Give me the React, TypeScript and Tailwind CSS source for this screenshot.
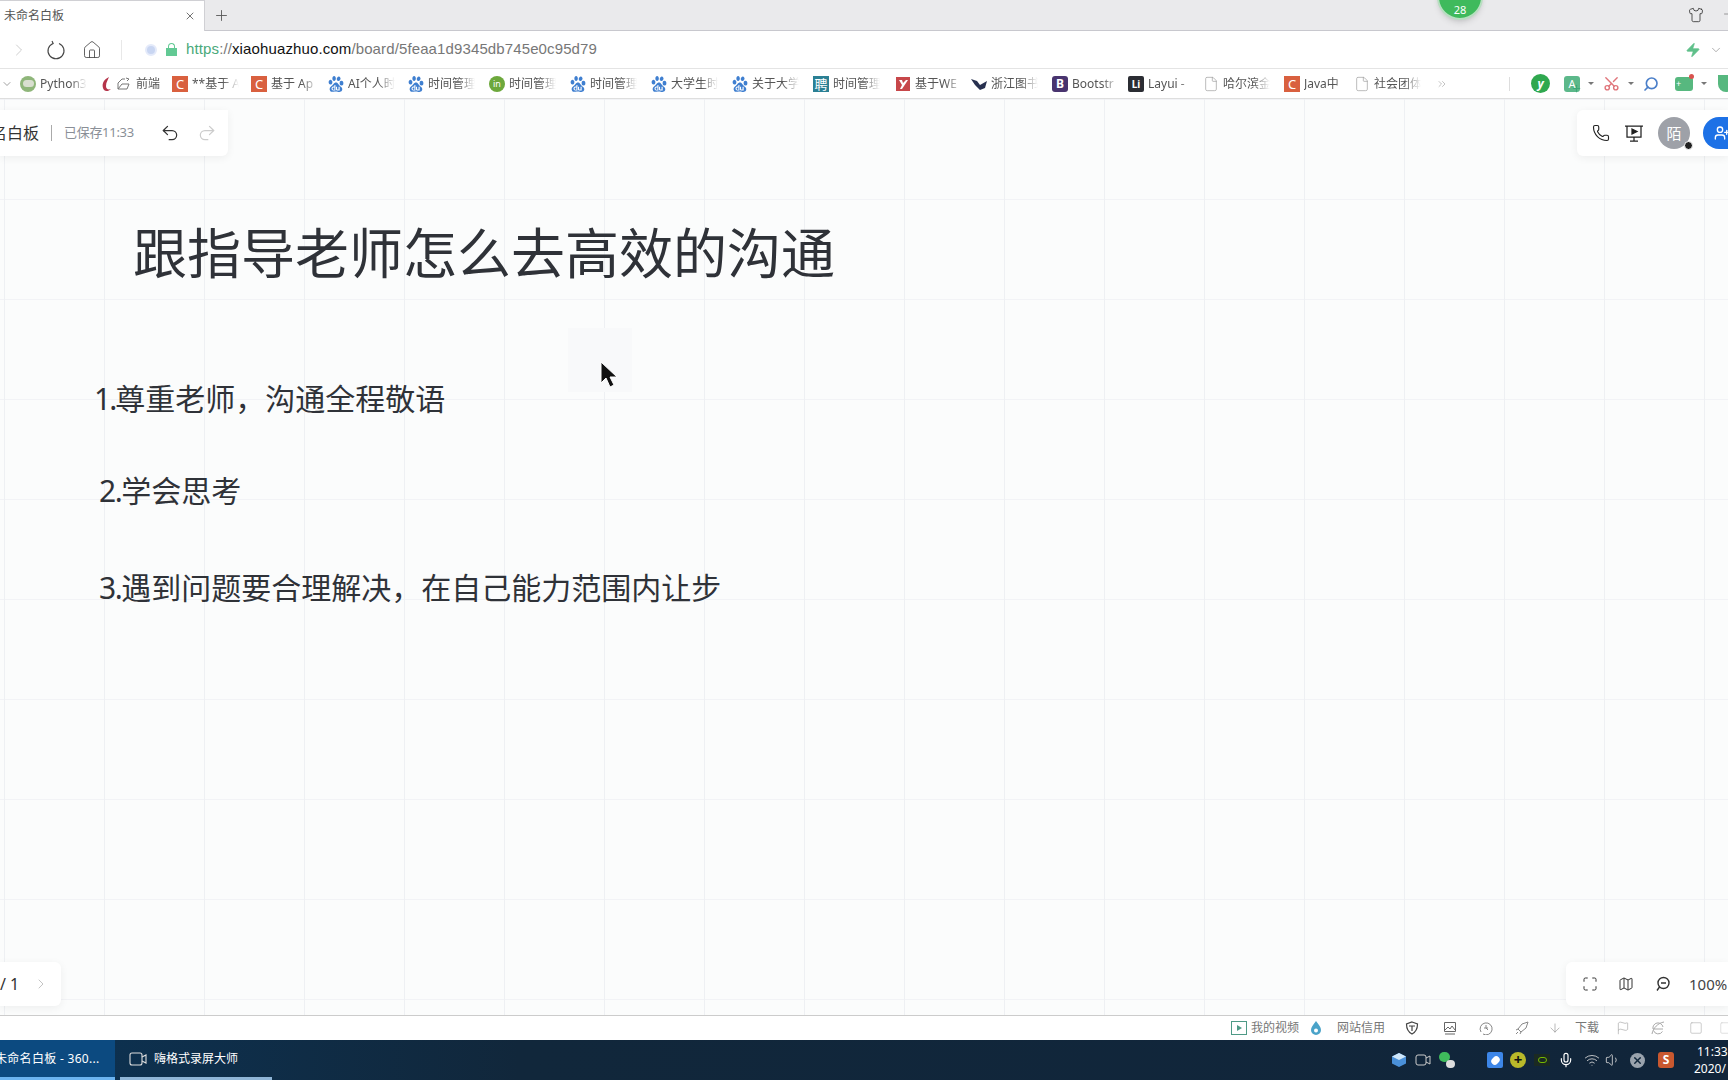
import { ChevronDown, ChevronRight, ChevronsRight, File, Flag, Home, Map, Maximize, Minus, Phone, Plus, Redo2, Scissors, Search, Shirt, Undo2, UserPlus, X, Zap, ArrowDown, Square, Volume1, Wifi, Mic } from 'lucide-react';
import { SiBaidu } from 'react-icons/si';

const bookmarks = [
  { kind: 'python', label: 'Python3', width: 'w-[78px]' },
  { kind: 'front', label: '前端', width: 'w-[74px]' },
  { kind: 'c', label: '**基于 A', width: 'w-[79px]' },
  { kind: 'c', label: '基于 Ap', width: 'w-[77px]' },
  { kind: 'paw', label: 'AI个人时', width: 'w-[80px]' },
  { kind: 'paw', label: '时间管理', width: 'w-[81px]' },
  { kind: 'in', label: '时间管理', width: 'w-[81px]' },
  { kind: 'paw', label: '时间管理', width: 'w-[81px]' },
  { kind: 'paw', label: '大学生时', width: 'w-[81px]' },
  { kind: 'paw', label: '关于大学', width: 'w-[81px]' },
  { kind: 'pin', label: '时间管理', width: 'w-[82px]' },
  { kind: 'red', label: '基于WE', width: 'w-[76px]' },
  { kind: 'bird', label: '浙江图书', width: 'w-[81px]' },
  { kind: 'bootstrap', label: 'Bootstr', width: 'w-[76px]' },
  { kind: 'layui', label: 'Layui -', width: 'w-[75px]' },
  { kind: 'doc', label: '哈尔滨金', width: 'w-[81px]' },
  { kind: 'c', label: 'Java中', width: 'w-[70px]' },
  { kind: 'doc', label: '社会团体', width: 'w-[69px]' },
];

function Favicon({ kind }: { kind: string }) {
  if (kind === 'paw') return <SiBaidu className="w-4 h-4 shrink-0 text-[#3f7fd0]" />;
  if (kind === 'doc') return <File className="w-4 h-4 shrink-0 text-[#9a9a9a]" strokeWidth={1} />;
  if (kind === 'c') {
    return <div className="w-4 h-4 shrink-0 bg-[#d9603f] text-white text-[13px] leading-4 text-center">C</div>;
  }
  if (kind === 'python') {
    return (
      <div className="w-4 h-4 shrink-0 rounded-full bg-[#8fb67a] flex items-center justify-center">
        <div className="w-[11px] h-[7px] rounded-sm bg-[#d9dfd0]" />
      </div>
    );
  }
  if (kind === 'in') {
    return <div className="w-4 h-4 shrink-0 rounded-full bg-[#6da83c] text-white text-[9px] leading-4 text-center">in</div>;
  }
  if (kind === 'pin') {
    return <div className="w-4 h-4 shrink-0 bg-[#2b8094] text-white text-[13px] leading-4 text-center">聘</div>;
  }
  if (kind === 'bootstrap') {
    return <div className="w-4 h-4 shrink-0 rounded-[3px] bg-[#49346f] text-white text-[12px] font-bold leading-4 text-center">B</div>;
  }
  if (kind === 'layui') {
    return <div className="w-4 h-4 shrink-0 rounded-[2px] bg-[#2b2d33] text-white text-[10px] font-bold leading-4 text-center">Li</div>;
  }
  if (kind === 'red') {
    return (
      <svg viewBox="0 0 16 16" className="w-4 h-4 shrink-0">
        <rect x="1" y="1" width="14" height="14" fill="#c7474a" />
        <path d="M4 4h3l1 3 3-3h2l-6 9H5l2-4z" fill="#fff" />
      </svg>
    );
  }
  if (kind === 'bird') {
    return (
      <svg viewBox="0 0 16 16" className="w-4 h-4 shrink-0">
        <path d="M0 3l6 2 3 4v5L4 9zM9 9l7-4-2 7-5 2z" fill="#27304f" />
      </svg>
    );
  }
  return (
    <div className="flex items-center gap-[2px] shrink-0">
      <svg viewBox="0 0 16 16" className="w-4 h-4">
        <path d="M11 1C5 4 3 9 6 14c2 2 5 1 7-1-3 1-5 0-5-3 0-4 2-6 3-9z" fill="#b5344a" />
      </svg>
      <svg viewBox="0 0 16 16" className="w-4 h-4" fill="none" stroke="#777" strokeWidth="1">
        <path d="M2 13V7l4-4h3M2 13h9l2-5H6zM10 2l3 1-2 2" />
      </svg>
    </div>
  );
}

export default function App() {
  return (
    <div className="w-[1728px] h-[1080px] overflow-hidden flex flex-col bg-white text-[#444] font-['Noto_Sans','Noto_Sans_CJK_SC',sans-serif]">
      {/* tab strip */}
      <div className="relative h-[31px] shrink-0 flex items-stretch bg-[#eaeaec] border-b border-[#c8c8ce]">
        <div className="w-[205px] -mb-px bg-white border-r border-t border-[#d0d0d4] flex items-center pl-1 pr-2 text-xs text-[#555]">
          <span>未命名白板</span>
          <X className="ml-auto w-3 h-3 text-[#444]" strokeWidth={1.5} />
        </div>
        <Plus className="ml-2 mt-[7px] w-[17px] h-[17px] text-[#555]" strokeWidth={1.25} />
        <div className="absolute left-[1437px] top-[-26px] w-[46px] h-[46px] rounded-full bg-[#3fba5c] border-2 border-[#b7dfc0] shadow-md flex items-end justify-center text-[11px] leading-[17px] text-white">
          28
        </div>
        <Shirt className="absolute left-[1688px] top-[7px] w-4 h-4 text-[#333]" strokeWidth={1.25} />
        <Minus className="absolute left-[1722px] top-[8px] w-3 h-3 text-[#666]" strokeWidth={1.25} />
      </div>

      {/* address bar */}
      <div className="h-[38px] shrink-0 flex items-center bg-white border-b border-[#e4e4e4]">
        <ChevronRight className="ml-[9px] w-5 h-5 text-[#c4c4c4]" strokeWidth={1} />
        <svg viewBox="0 0 20 20" className="ml-[17px] w-5 h-5" fill="none" stroke="#444" strokeWidth="1.1">
          <path d="M7 3.4a8 8 0 1 0 6 0M6 1l1.200 2.600L4.600 5" />
        </svg>
        <Home className="ml-[16px] w-5 h-5 text-[#444]" strokeWidth={1} />
        <div className="ml-[19px] w-px h-5 bg-[#e8e8e8]" />
        <div className="ml-[23px] w-[12px] h-[12px] rounded-full bg-[#c9d6f2] border-2 border-[#e4eafa]" />
        <div className="ml-[9px] flex flex-col items-center">
          <div className="w-[7px] h-[5px] rounded-t-full border border-b-0 border-[#62c994]" />
          <div className="w-[11px] h-[8px] bg-[#62c994]" />
        </div>
        <div className="ml-[9px] text-[15px] tracking-[0.12px] text-[#777] font-['Liberation_Sans',sans-serif]">
          <span className="text-[#4aa97a]">https</span>://<span className="text-[#111]">xiaohuazhuo.com</span>/board/5feaa1d9345db745e0c95d79
        </div>
        <Zap className="ml-auto mr-[2px] w-4 h-4 text-[#5fc08a] fill-[#5fc08a]" strokeWidth={1} />
        <ChevronDown className="ml-[6px] mr-[5px] w-[14px] h-[14px] text-[#777]" strokeWidth={1} />
      </div>

      {/* bookmarks */}
      <div className="h-[30px] shrink-0 flex items-center bg-white border-b border-[#dedede] overflow-hidden">
        <ChevronDown className="ml-px mr-[7px] w-3 h-3 shrink-0 text-[#666]" strokeWidth={1.25} />
        {bookmarks.map((b, i) => (
          <div key={i} className={`${b.width} shrink-0 flex items-center gap-1`}>
            <Favicon kind={b.kind} />
            <span className="w-[47px] overflow-hidden whitespace-nowrap text-xs text-[#555] [mask-image:linear-gradient(to_right,black_65%,transparent)]">
              {b.label}
            </span>
          </div>
        ))}
        <ChevronsRight className="ml-[13px] w-3 h-3 shrink-0 text-[#888]" strokeWidth={1} />
        <div className="ml-[61px] w-px h-[14px] shrink-0 bg-[#ddd]" />
        <div className="ml-[21px] w-[19px] h-[19px] shrink-0 rounded-full bg-[#2fa84f] text-white text-xs font-bold italic leading-[19px] text-center">y</div>
        <div className="relative ml-[14px] w-4 h-4 shrink-0 rounded-[3px] bg-[#5cb88a] text-white text-[11px] leading-4 text-center">
          A
          <Plus className="absolute left-[7px] top-[7px] w-[11px] h-[11px] text-[#3fa878]" strokeWidth={2.5} />
        </div>
        <div className="ml-[8px] w-0 h-0 shrink-0 border-x-[3px] border-t-[3px] border-x-transparent border-t-[#777]" />
        <Scissors className="ml-[9px] w-[17px] h-[17px] shrink-0 -rotate-90 text-[#e0757b]" strokeWidth={2} />
        <div className="ml-[8px] w-0 h-0 shrink-0 border-x-[3px] border-t-[3px] border-x-transparent border-t-[#777]" />
        <Search className="ml-[9px] w-4 h-4 shrink-0 -scale-x-100 text-[#4b7fc9]" strokeWidth={2.5} />
        <div className="relative ml-[16px] w-[18px] h-[14px] shrink-0 rounded-[3px] bg-[#57b87f] text-white text-[9px] leading-[13px] pl-px">
          +
          <div className="absolute -right-px -top-[3px] w-[5px] h-[5px] rounded-full bg-[#d9534f]" />
        </div>
        <div className="ml-[8px] w-0 h-0 shrink-0 border-x-[3px] border-t-[3px] border-x-transparent border-t-[#777]" />
        <div className="ml-[11px] w-[16px] h-[17px] shrink-0 rounded-b-full bg-[#57b87f]" />
      </div>

      {/* whiteboard */}
      <div className="relative flex-1 overflow-hidden bg-[#fbfcfc] bg-[linear-gradient(to_right,#eef0f3_1px,transparent_1px),linear-gradient(to_bottom,#f2f3f6_1px,transparent_1px)] bg-[size:100px_100px] bg-[position:4px_0]">
        <div className="absolute left-0 top-[11px] w-[228px] h-[46px] bg-white rounded-br-md shadow-[0_2px_8px_rgba(0,0,0,0.06)] flex items-center overflow-hidden">
          <span className="ml-[-41px] shrink-0 text-base text-[#333]">未命名白板</span>
          <div className="ml-[12px] w-px h-[16px] shrink-0 bg-[#aaa]" />
          <span className="ml-[12px] shrink-0 text-[13px] tracking-[-0.3px] text-[#8a8f97]">已保存11:33</span>
          <Undo2 className="ml-[26px] w-5 h-5 shrink-0 text-[#333]" strokeWidth={1.5} />
          <Redo2 className="ml-[17px] w-5 h-5 shrink-0 text-[#ccc]" strokeWidth={1.5} />
        </div>

        <div className="absolute right-0 top-[11px] w-[151px] h-[46px] bg-white rounded-l-md shadow-[0_2px_8px_rgba(0,0,0,0.06)] flex items-center">
          <Phone className="ml-[15px] w-[18px] h-[18px] shrink-0 text-[#222]" strokeWidth={1.5} />
          <svg viewBox="0 0 20 20" className="ml-[14px] w-5 h-5 shrink-0" fill="none" stroke="#222" strokeWidth="1.25">
            <path d="M3 3h14v11H3zM1 3h18M10 14v4M6 18h8" />
            <path d="M8 6l5 2.500L8 11z" fill="#222" />
          </svg>
          <div className="relative ml-[14px] w-8 h-8 shrink-0 rounded-full bg-[#9ea1a8] text-white text-[15px] leading-8 text-center">
            陌
            <div className="absolute right-[-3px] bottom-[-1px] w-[9px] h-[9px] rounded-full bg-[#222] border border-white" />
          </div>
          <div className="ml-[13px] w-[40px] h-8 shrink-0 rounded-l-full bg-[#1d71e6] flex items-center pl-[11px]">
            <UserPlus className="w-4 h-4 text-white" strokeWidth={2} />
          </div>
        </div>

        <h1 className="absolute left-[133px] top-[123px] text-[54px] leading-[62px] font-normal whitespace-nowrap text-[#2f3238]">
          跟指导老师怎么去高效的沟通
        </h1>
        <p className="absolute left-[94px] top-[280px] text-[30px] leading-[40px] whitespace-nowrap text-[#2f3238]"><span className="tracking-[-2px]">1.</span>尊重老师，沟通全程敬语</p>
        <p className="absolute left-[99px] top-[372px] text-[30px] leading-[40px] whitespace-nowrap text-[#2f3238]"><span className="tracking-[-1.5px]">2.</span>学会思考</p>
        <p className="absolute left-[99px] top-[469px] text-[30px] leading-[40px] whitespace-nowrap text-[#2f3238]"><span className="tracking-[-1.5px]">3.</span>遇到问题要合理解决，在自己能力范围内让步</p>

        <div className="absolute left-[568px] top-[229px] w-[64px] h-[64px] bg-[#f8f9fa]" />
        <svg viewBox="0 0 18 27" className="absolute left-[600px] top-[262px] w-[18px] h-[27px]">
          <path d="M1 1v21l5-5 4 9 4-2-4-8h7z" fill="#111" stroke="#fff" strokeWidth="1" />
        </svg>

        <div className="absolute left-0 top-[863px] w-[61px] h-[44px] bg-white rounded-r-md shadow-[0_2px_8px_rgba(0,0,0,0.06)] flex items-center text-base text-[#333]">
          <span>/ 1</span>
          <ChevronRight className="ml-[14px] w-4 h-4 text-[#c4c4c4]" strokeWidth={1.5} />
        </div>

        <div className="absolute right-0 top-[863px] w-[162px] h-[44px] bg-white rounded-l-md shadow-[0_2px_8px_rgba(0,0,0,0.06)] flex items-center text-[15px] text-[#444]">
          <Maximize className="ml-[16px] w-4 h-4 shrink-0 text-[#333]" strokeWidth={1.5} />
          <Map className="ml-[20px] w-4 h-4 shrink-0 text-[#333]" strokeWidth={1.5} />
          <svg viewBox="0 0 16 16" className="ml-[21px] w-4 h-4 shrink-0" fill="none" stroke="#333" strokeWidth="1.4">
            <circle cx="8.500" cy="7" r="5.500" />
            <path d="M6 7h5M4.500 11L2 14.500" />
          </svg>
          <span className="ml-[18px] shrink-0">100%</span>
        </div>
      </div>

      {/* status bar */}
      <div className="h-[25px] shrink-0 flex items-center pl-[1231px] bg-white border-t border-[#ccc] text-xs text-[#777] overflow-hidden whitespace-nowrap">
        <div className="w-4 h-[14px] shrink-0 border border-[#4e9a86] flex items-center justify-center">
          <div className="w-0 h-0 border-y-[3px] border-l-[5px] border-y-transparent border-l-[#4e9a86]" />
        </div>
        <span className="ml-1 shrink-0">我的视频</span>
        <svg viewBox="0 0 12 16" className="ml-[11px] w-3 h-4 shrink-0">
          <path d="M6 1c3 4 5 6 5 9a5 5 0 0 1-10 0c0-3 2-5 5-9z" fill="#4aa3c9" />
          <circle cx="6" cy="10.500" r="2" fill="#fff" />
        </svg>
        <span className="ml-[15px] shrink-0">网站信用</span>
        <svg viewBox="0 0 14 14" className="ml-5 w-[14px] h-[14px] shrink-0" fill="none" stroke="#444" strokeWidth="1.2">
          <path d="M7 1l5.500 2c0 5-1.500 8-5.500 10C3 11 1.500 8 1.500 3zM4 5h6M7 5v5" />
        </svg>
        <svg viewBox="0 0 14 14" className="ml-6 w-[14px] h-[14px] shrink-0" fill="none" stroke="#666" strokeWidth="1">
          <path d="M1.500 1.500h11v9h-11zM2 9l3-3 2 2 2-3 3 4M2 13h10" />
        </svg>
        <svg viewBox="0 0 14 14" className="ml-[22px] w-[14px] h-[14px] shrink-0" fill="none" stroke="#888" strokeWidth="1">
          <path d="M2 11a6 6 0 1 1 2 2M7 4v3l2 2M5 7h4" />
        </svg>
        <svg viewBox="0 0 14 14" className="ml-[22px] w-[14px] h-[14px] shrink-0" fill="none" stroke="#888" strokeWidth="1">
          <path d="M13 1L7 3 3 8l3 3 5-4zM3 8l-2 1M6 11l-1 2M1 13l2-2" />
        </svg>
        <ArrowDown className="ml-[19px] w-[14px] h-[14px] shrink-0 text-[#888]" strokeWidth={1} />
        <span className="ml-[13px] shrink-0">下载</span>
        <Flag className="ml-[17px] w-[14px] h-[14px] shrink-0 text-[#999]" strokeWidth={1} />
        <svg viewBox="0 0 14 14" className="ml-[21px] w-[14px] h-[14px] shrink-0" fill="none" stroke="#aaa" strokeWidth="1">
          <path d="M12 8H2a5 5 0 0 1 10-2M2.500 9.500a5 5 0 0 0 9 1M1 13C2 7 7 2 13 1" />
        </svg>
        <Square className="ml-6 w-[14px] h-[14px] shrink-0 text-[#aaa]" strokeWidth={1} />
        <Square className="ml-4 w-[14px] h-[14px] shrink-0 text-[#ccc]" strokeWidth={1} />
      </div>

      {/* taskbar */}
      <div className="h-[40px] shrink-0 flex items-stretch bg-[linear-gradient(to_right,#0c3354,#11273b_30%,#11253a)] text-white overflow-hidden whitespace-nowrap">
        <div className="w-[115px] shrink-0 bg-[#0c4a80] border-b-[3px] border-[#6cb4f0] flex items-center text-xs tracking-[0.3px] overflow-hidden">
          <span className="ml-[-5px] shrink-0">未命名白板 - 360...</span>
        </div>
        <div className="ml-[5px] w-[152px] shrink-0 border-b-[3px] border-[#8fb5d6] flex items-center text-xs">
          <svg viewBox="0 0 18 14" className="ml-[9px] w-[18px] h-[14px] shrink-0" fill="none" stroke="#ddd" strokeWidth="1.1">
            <rect x="1" y="1" width="12" height="12" rx="2" />
            <path d="M13 5l4-2v8l-4-2" />
          </svg>
          <span className="ml-[7px]">嗨格式录屏大师</span>
        </div>
        <div className="ml-[1119px] flex items-center shrink-0">
          <svg viewBox="0 0 16 16" className="w-4 h-4 shrink-0">
            <path d="M8 1l7 3.500v7L8 15l-7-3.500v-7z" fill="#4a90d9" />
            <path d="M8 1l7 3.500L8 8 1 4.500z" fill="#cfe6fa" />
          </svg>
          <svg viewBox="0 0 16 12" className="ml-2 w-4 h-3 shrink-0" fill="none" stroke="#ccc" strokeWidth="1">
            <rect x="1" y="1" width="10" height="10" rx="2" />
            <path d="M11 4l4-2v8l-4-2" />
          </svg>
          <div className="relative ml-2 w-4 h-4 shrink-0">
            <div className="absolute left-0 top-0 w-[11px] h-[10px] rounded-full bg-[#3fba5c]" />
            <div className="absolute right-0 bottom-0 w-[9px] h-[8px] rounded-full bg-[#ddd]" />
          </div>
          <div className="ml-8 w-4 h-4 shrink-0 rounded-[2px] bg-[#3d86e8] flex items-center justify-center">
            <div className="w-[9px] h-[7px] rounded-full bg-white -rotate-45" />
          </div>
          <div className="ml-[7px] w-4 h-4 shrink-0 rounded-full bg-[#b9b92a] text-[#111] text-[15px] font-bold leading-[15px] text-center">+</div>
          <div className="ml-2 w-4 h-3 shrink-0 bg-[#1b2a22] flex items-center justify-center">
            <div className="w-[9px] h-[6px] rounded-full border border-[#76b900]" />
          </div>
          <Mic className="ml-2 w-4 h-4 shrink-0 text-white" strokeWidth={1.75} />
          <Wifi className="ml-[10px] w-4 h-4 shrink-0 text-[#ddd]" strokeWidth={1.25} />
          <Volume1 className="ml-[5px] w-4 h-4 shrink-0 text-[#ddd]" strokeWidth={1.25} />
          <div className="ml-[9px] w-[15px] h-[15px] shrink-0 rounded-full bg-[#9aa3ad] flex items-center justify-center">
            <X className="w-[11px] h-[11px] text-[#11273b]" strokeWidth={3} />
          </div>
          <div className="ml-[13px] w-4 h-4 shrink-0 rounded-[3px] bg-[#c9582f] text-white text-xs font-bold leading-4 text-center">S</div>
          <div className="ml-5 flex flex-col text-xs leading-[17px] shrink-0">
            <span className="pl-[3px]">11:33</span>
            <span>2020/</span>
          </div>
        </div>
      </div>
    </div>
  );
}
